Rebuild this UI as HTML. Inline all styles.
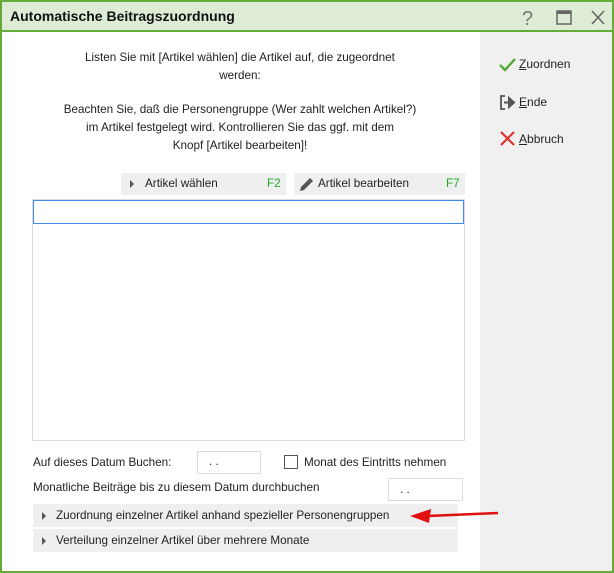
<!DOCTYPE html>
<html><head><meta charset="utf-8"><style>
*{margin:0;padding:0;box-sizing:border-box}
body{width:614px;height:573px;overflow:hidden;background:#fff;font-family:"Liberation Sans",sans-serif;font-size:11.7px;color:#222;position:relative}
.frame{position:absolute;left:0;top:0;width:614px;height:573px;border:2px solid #64ab3a}
.title{position:absolute;left:2px;top:2px;width:610px;height:30px;background:#deebd5;border-bottom:2px solid #64ab3a}
.title span{position:absolute;left:8px;top:6px;font-size:14px;font-weight:bold;color:#111}
.side{position:absolute;left:480px;top:32px;width:132px;height:539px;background:#f0f0f0}
.abs{position:absolute;white-space:nowrap}
.c{text-align:center;width:400px;left:40px;line-height:18px}
.btn{position:absolute;background:#efefef;height:22px;top:173px}
.box{position:absolute;border:1px solid #ddd;background:#fff}
.bar{position:absolute;left:33px;width:425px;height:23px;background:#efefef}
.tri{position:absolute;left:9px;top:8px;width:0;height:0;border-top:4px solid transparent;border-bottom:4px solid transparent;border-left:4px solid #555}
u{text-decoration:underline}
</style></head><body>
<div class="frame"></div>
<div class="title"><span>Automatische Beitragszuordnung</span>
<svg style="position:absolute;left:516px;top:6px" width="90" height="20">
<text x="4" y="17" font-family="Liberation Sans" font-size="20" fill="#777">?</text>
<rect x="39" y="3" width="14" height="13" fill="none" stroke="#666" stroke-width="1.5"/><rect x="39" y="3" width="14" height="3" fill="#666"/>
<path d="M74 3 L86 16 M86 3 L74 16" stroke="#666" stroke-width="1.6"/>
</svg></div>
<div class="side">
<svg class="abs" style="left:18px;top:24px" width="20" height="18"><path d="M2 9 L7 14 L17 3" stroke="#5aa83a" stroke-width="2.5" fill="none"/></svg>
<div class="abs" style="left:39px;top:25px;font-size:12px"><u>Z</u>uordnen</div>
<svg class="abs" style="left:19px;top:62px" width="20" height="18"><path d="M6 2 H2 V15 H6" stroke="#555" stroke-width="1.8" fill="none"/><path d="M5 8.5 H11 M10 4 L15 8.5 L10 13 Z" stroke="#555" stroke-width="2" fill="#555"/></svg>
<div class="abs" style="left:39px;top:63px;font-size:12px"><u>E</u>nde</div>
<svg class="abs" style="left:18px;top:98px" width="20" height="18"><path d="M3 2 L16 15 M16 2 L3 15" stroke="#e03030" stroke-width="2.2"/></svg>
<div class="abs" style="left:39px;top:100px;font-size:12px"><u>A</u>bbruch</div>
</div>
<div class="abs c" style="top:49px">Listen Sie mit [Artikel wählen] die Artikel auf, die zugeordnet<br>werden:</div>
<div class="abs c" style="top:101px">Beachten Sie, daß die Personengruppe (Wer zahlt welchen Artikel?)<br>im Artikel festgelegt wird. Kontrollieren Sie das ggf. mit dem<br>Knopf [Artikel bearbeiten]!</div>
<div class="btn" style="left:121px;width:165px"><div class="tri" style="top:7px"></div><span class="abs" style="left:24px;top:4px">Artikel wählen</span><span class="abs" style="left:146px;top:4px;color:#2a2">F2</span></div>
<div class="btn" style="left:294px;width:171px"><svg class="abs" style="left:3px;top:2px" width="18" height="18"><path d="M3 16 L4 12 L13 3 L16 6 L7 15 Z" fill="#555"/></svg><span class="abs" style="left:24px;top:4px">Artikel bearbeiten</span><span class="abs" style="left:152px;top:4px;color:#2a2">F7</span></div>
<div class="box" style="left:32px;top:199px;width:433px;height:242px"></div>
<div class="abs" style="left:33px;top:200px;width:431px;height:24px;border:1px solid #3d8ef0"></div>
<div class="abs" style="left:33px;top:456px">Auf dieses Datum Buchen:</div>
<div class="box" style="left:197px;top:451px;width:64px;height:23px"><span class="abs" style="left:11px;top:3px">. .</span></div>
<div class="abs" style="left:284px;top:455px;width:14px;height:14px;border:1px solid #555"></div>
<div class="abs" style="left:304px;top:456px">Monat des Eintritts nehmen</div>
<div class="abs" style="left:33px;top:481px">Monatliche Beiträge bis zu diesem Datum durchbuchen</div>
<div class="box" style="left:388px;top:478px;width:75px;height:23px"><span class="abs" style="left:11px;top:4px">. .</span></div>
<div class="bar" style="top:504px"><div class="tri"></div><span class="abs" style="left:23px;top:5px">Zuordnung einzelner Artikel anhand spezieller Personengruppen</span></div>
<div class="bar" style="top:529px"><div class="tri"></div><span class="abs" style="left:23px;top:5px">Verteilung einzelner Artikel über mehrere Monate</span></div>
<svg class="abs" style="left:405px;top:505px" width="95" height="20"><path d="M93 8 L22 11" stroke="#e01010" stroke-width="2.5"/><path d="M5 11 L26 4 L24 18 Z" fill="#e01010"/></svg>
</body></html>
